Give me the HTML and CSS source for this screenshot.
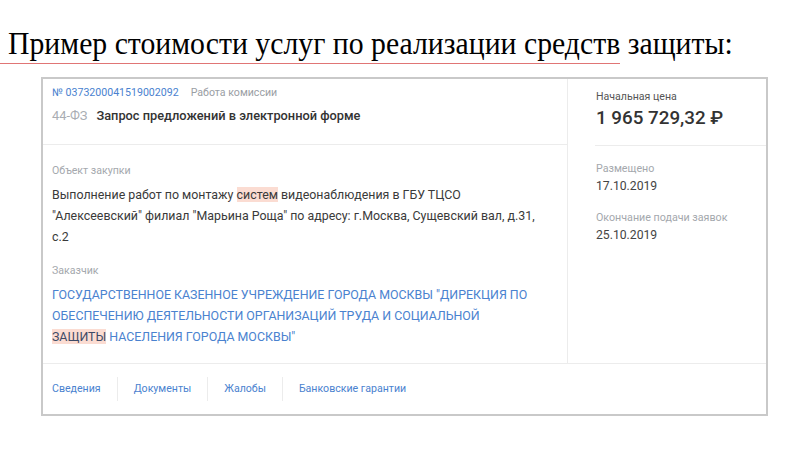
FILE: index.html
```html
<!DOCTYPE html>
<html lang="ru">
<head>
<meta charset="utf-8">
<link rel="stylesheet" href="styles.css">
</head>
<body>
<h1 class="title"><span class="title-text">Пример стоимости услуг по реализации средств защиты:</span></h1>
<div class="card">
  <div class="main">
    <div class="left">
      <div class="head">
        <div class="meta"><span class="num">№ 0373200041519002092</span><span class="stage">Работа комиссии</span></div>
        <div class="kind"><span class="law">44-ФЗ</span><span class="ktitle">Запрос предложений в электронной форме</span></div>
      </div>
      <div class="section">
        <div class="label">Объект закупки</div>
        <div class="text">Выполнение работ по монтажу <mark class="hl">систем</mark> видеонаблюдения в ГБУ ТЦСО<br>"Алексеевский" филиал "Марьина Роща" по адресу: г.Москва, Сущевский вал, д.31,<br>с.2</div>
      </div>
      <div class="section customer">
        <div class="label">Заказчик</div>
        <div class="text link">ГОСУДАРСТВЕННОЕ КАЗЕННОЕ УЧРЕЖДЕНИЕ ГОРОДА МОСКВЫ "ДИРЕКЦИЯ ПО<br>ОБЕСПЕЧЕНИЮ ДЕЯТЕЛЬНОСТИ ОРГАНИЗАЦИЙ ТРУДА И СОЦИАЛЬНОЙ<br><mark class="hl dark">ЗАЩИТЫ</mark> НАСЕЛЕНИЯ ГОРОДА МОСКВЫ"</div>
      </div>
    </div>
    <div class="right">
      <div class="price">
        <div class="plabel">Начальная цена</div>
        <div class="pvalue">1 965 729,32 ₽</div>
      </div>
      <div class="dates">
        <div class="dlabel">Размещено</div>
        <div class="dvalue">17.10.2019</div>
        <div class="dlabel second">Окончание подачи заявок</div>
        <div class="dvalue">25.10.2019</div>
      </div>
    </div>
  </div>
  <div class="tabs">
    <span class="tab">Сведения</span>
    <span class="tab">Документы</span>
    <span class="tab">Жалобы</span>
    <span class="tab">Банковские гарантии</span>
  </div>
</div>
</body>
</html>
```
FILE: styles.css
```css
html, body {
  margin: 0;
  padding: 0;
  background: #ffffff;
}
body {
  width: 800px;
  height: 450px;
  overflow: hidden;
  font-family: Roboto, "Noto Sans", sans-serif;
  color: #333;
}
.title {
  margin: 0;
  padding: 25px 0 0 8px;
  width: 612px;
  height: 38px;
  font-family: "Liberation Serif", "Times New Roman", serif;
  font-weight: normal;
  font-size: 32px;
  line-height: 36px;
  color: #000;
  border-bottom: 1px solid #e07575;
  white-space: nowrap;
}
.title-text {
  display: inline-block;
  transform: scaleX(0.93);
  transform-origin: left center;
}
.card {
  margin: 13px 0 0 41px;
  width: 723px;
  border: 2px solid #c9c9c9;
  background: #fff;
}
.main {
  display: grid;
  grid-template-columns: 525px 1fr;
  border-bottom: 1px solid #ececec;
}
.left {
  border-right: 1px solid #ececec;
  padding-bottom: 16px;
}
.head {
  height: 66px;
  box-sizing: border-box;
  padding: 7px 0 0 9px;
  border-bottom: 1px solid #ececec;
}
.meta {
  font-size: 10.6px;
  line-height: 14px;
  display: flex;
  gap: 12px;
}
.num { color: #4a82cf; }
.stage { color: #9a9ea4; }
.kind {
  margin-top: 8px;
  display: flex;
  gap: 9px;
  font-size: 12.8px;
  line-height: 16px;
}
.law { color: #a9adb3; }
.ktitle { color: #333; font-weight: 500; }
.section {
  padding: 19px 0 0 9px;
}
.section.customer { padding-top: 17px; }
.label {
  font-size: 10.6px;
  line-height: 14px;
  color: #a4a8ad;
  margin-bottom: 6px;
}
.text {
  font-size: 12.4px;
  line-height: 21px;
  color: #3a3a3a;
  white-space: nowrap;
}
.text.link {
  color: #4a82cf;
}
.hl {
  background: #fbdcd2;
  color: inherit;
}
.hl.dark { color: #3d4a66; }
.right {
  display: flex;
  flex-direction: column;
}
.price {
  margin-left: 27px;
  height: 67px;
  box-sizing: border-box;
  padding: 11px 0 0 1px;
  border-bottom: 1px solid #ececec;
}
.plabel {
  font-size: 10.6px;
  line-height: 13px;
  color: #555;
}
.pvalue {
  margin-top: 3px;
  font-size: 18.8px;
  line-height: 24px;
  font-weight: 500;
  color: #333;
}
.dates {
  padding: 16px 0 0 28px;
}
.dlabel {
  font-size: 10.7px;
  line-height: 14px;
  color: #a4a8ad;
}
.dlabel.second { margin-top: 17px; }
.dvalue {
  margin-top: 3px;
  font-size: 12.2px;
  line-height: 15px;
  color: #444;
}
.tabs {
  height: 50px;
  display: flex;
  align-items: center;
  padding-left: 9px;
}
.tab {
  font-size: 10.6px;
  color: #4a82cf;
  padding: 0 16px;
  border-left: 1px solid #ececec;
  line-height: 24px;
}
.tab:first-child {
  padding-left: 0;
  border-left: none;
}
```
